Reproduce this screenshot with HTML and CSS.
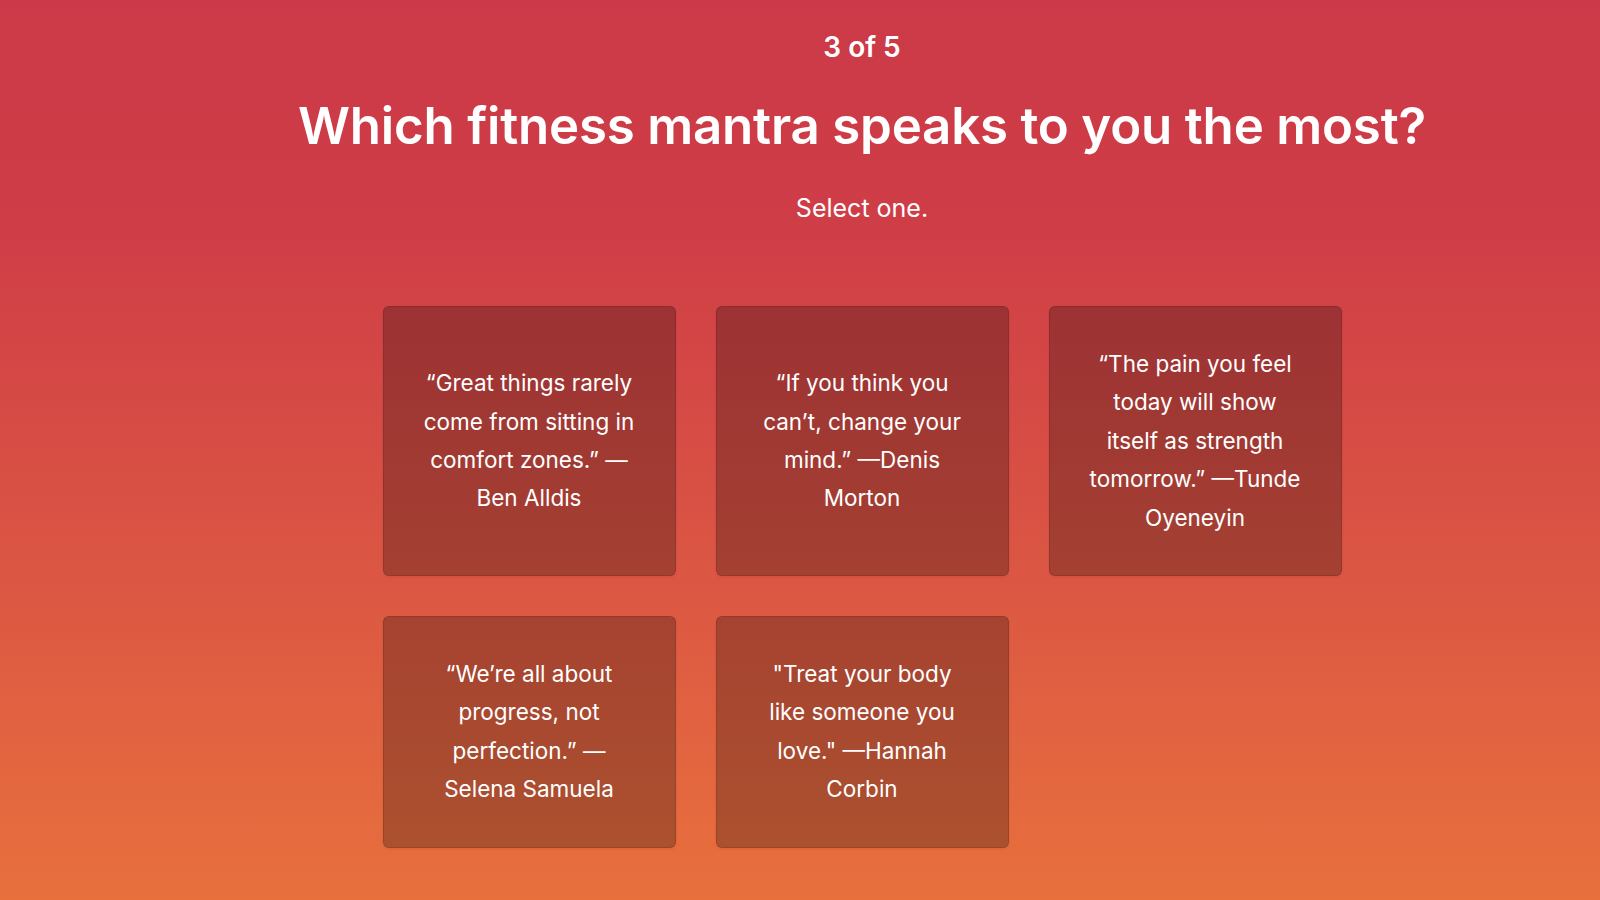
FILE: index.html
```html
<!DOCTYPE html>
<html lang="en">
<head>
    <meta charset="UTF-8">
    <meta name="viewport" content="width=device-width, initial-scale=1.0">
    <title>Fitness Quiz</title>
    <link rel="stylesheet" href="styles.css">
</head>
<body>
    <main class="quiz">
        <div class="step">3 of 5</div>
        <h1 class="question">Which fitness mantra speaks to you the most?</h1>
        <p class="hint">Select one.</p>

        <div class="options">
            <button class="option">“Great things rarely come from sitting in comfort zones.” —Ben Alldis</button>
            <button class="option">“If you think you can’t, change your mind.” —Denis Morton</button>
            <button class="option">“The pain you feel today will show itself as strength tomorrow.” —Tunde Oyeneyin</button>
            <button class="option">“We’re all about progress, not perfection.” —Selena Samuela</button>
            <button class="option">"Treat your body like someone you love." —Hannah Corbin</button>
        </div>
    </main>
</body>
</html>
```

FILE: styles.css
```css
html, body { margin: 0; height: 100%; }
body {
    font-family: Inter, "Noto Sans", Arial, sans-serif;
    color: #fff;
    background: linear-gradient(180deg, #cc3948 0%, #cf3d47 25%, #dc5743 65%, #e8703d 100%);
    min-height: 900px;
    overflow: hidden;
}
.quiz { margin-left: 124px; padding-top: 26px; text-align: center; }
.step { font-size: 28px; font-weight: 600; line-height: 42px; }
.question { font-size: 51px; font-weight: 600; line-height: 64px; margin: 26px 0 0; letter-spacing: -0.2px; }
.hint { font-size: 25px; line-height: 36px; margin: 32px 0 0; }
.options {
    display: grid;
    grid-template-columns: repeat(3, 293px);
    gap: 40px;
    justify-content: center;
    margin-top: 80px;
}
.option {
    font-family: inherit;
    font-size: 22.5px;
    line-height: 38.4px;
    color: #fff;
    text-align: center;
    padding: 38px 40px;
    background: rgba(0, 0, 0, 0.25);
    border: 1px solid rgba(0, 0, 0, 0.12);
    border-radius: 6px;
    box-shadow: 0 1px 3px rgba(0, 0, 0, 0.08);
    cursor: pointer;
}
```
